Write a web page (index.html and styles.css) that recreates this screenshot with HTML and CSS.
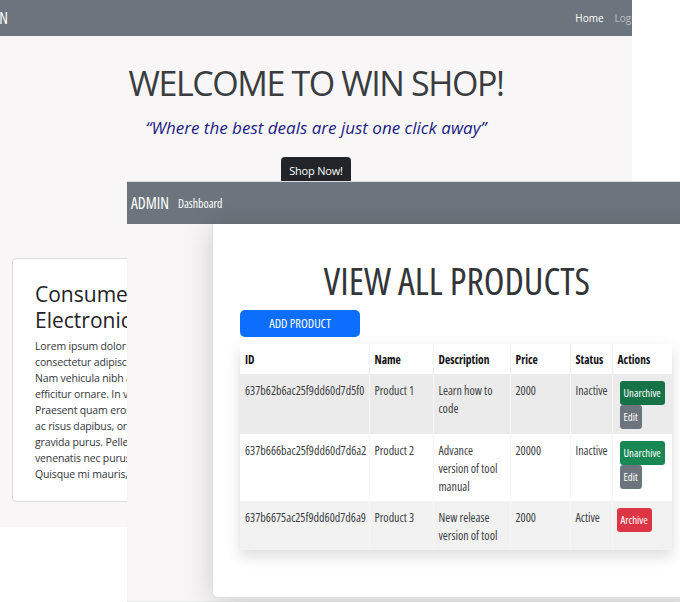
FILE: index.html
```html
<!DOCTYPE html>
<html lang="en">
<head>
<meta charset="utf-8">
<title>Win Shop</title>
<link rel="stylesheet" href="styles.css">
</head>
<body>
<div class="desk">
  <div class="shop">
    <nav class="shop-nav">
      <span class="brand shop-brand">ADMIN</span>
      <div class="shop-links">
        <a class="nav-link active">Home</a>
        <a class="nav-link">Logout</a>
      </div>
    </nav>
    <section class="hero">
      <h1 class="hero-title">WELCOME TO WIN SHOP!</h1>
      <p class="tagline">“Where the best deals are just one click away”</p>
      <button class="btn btn-dark">Shop Now!</button>
    </section>
    <div class="cards">
      <div class="card">
        <h2 class="card-title">Consumer Electronics</h2>
        <p class="card-text">
          <span>Lorem ipsum dolor sit amet,</span>
          <span>consectetur adipiscing elit.</span>
          <span>Nam vehicula nibh a sapien</span>
          <span>efficitur ornare. In vitae est.</span>
          <span>Praesent quam eros, tempus</span>
          <span>ac risus dapibus, ornare luctus</span>
          <span>gravida purus. Pellentesque</span>
          <span>venenatis nec purus vitae.</span>
          <span>Quisque mi mauris, rhoncus.</span>
        </p>
      </div>
    </div>
  </div>

  <div class="admin-window">
    <nav class="admin-nav">
      <span class="brand">ADMIN</span>
      <a class="admin-link">Dashboard</a>
    </nav>
    <div class="admin-body">
      <div class="admin-card">
        <h1 class="admin-title">VIEW ALL PRODUCTS</h1>
        <button class="btn btn-primary add-btn">ADD PRODUCT</button>
        <table class="products">
          <colgroup>
            <col class="c-id"><col class="c-name"><col class="c-desc"><col class="c-price"><col class="c-status"><col class="c-act">
          </colgroup>
          <thead>
            <tr><th>ID</th><th>Name</th><th>Description</th><th>Price</th><th>Status</th><th>Actions</th></tr>
          </thead>
          <tbody>
            <tr class="row-a">
              <td>637b62b6ac25f9dd60d7d5f0</td><td>Product 1</td><td>Learn how to code</td><td>2000</td><td>Inactive</td>
              <td><button class="btn-sm btn-success dark">Unarchive</button><button class="btn-sm btn-secondary">Edit</button></td>
            </tr>
            <tr class="row-b">
              <td>637b666bac25f9dd60d7d6a2</td><td>Product 2</td><td>Advance version of tool manual</td><td>20000</td><td>Inactive</td>
              <td><button class="btn-sm btn-success">Unarchive</button><button class="btn-sm btn-secondary">Edit</button></td>
            </tr>
            <tr class="row-c">
              <td>637b6675ac25f9dd60d7d6a9</td><td>Product 3</td><td>New release version of tool</td><td>2000</td><td>Active</td>
              <td class="act-narrow"><button class="btn-sm btn-danger">Archive</button></td>
            </tr>
          </tbody>
        </table>
      </div>
    </div>
  </div>
</div>
</body>
</html>
```

FILE: styles.css
```css
* { box-sizing: border-box; }

html, body {
  margin: 0;
  padding: 0;
  background: #ffffff;
}

body {
  font-family: "Open Sans", "Noto Sans", sans-serif;
  color: #212529;
}

.desk {
  position: relative;
  width: 680px;
  height: 602px;
  overflow: hidden;
}

/* ---------- background shop page ---------- */
.shop {
  width: 632px;
  height: 527px;
  background: #f8f6f7;
  overflow: hidden;
}

.shop-nav {
  height: 36px;
  background: #6c757d;
  display: flex;
  align-items: center;
  justify-content: space-between;
}

.brand {
  color: #fff;
  font-size: 15.5px;
  font-stretch: condensed;
}

.shop-brand {
  margin-left: -30px;
}

.shop-links {
  display: flex;
  gap: 11px;
  margin-right: -15px;
}

.nav-link {
  font-size: 10px;
  color: rgba(255, 255, 255, 0.55);
}

.nav-link.active {
  color: #fff;
}

.hero {
  text-align: center;
  padding-top: 26px;
}

.hero-title {
  margin: 0;
  font-size: 34px;
  line-height: 42px;
  letter-spacing: -1.4px;
  font-weight: 400;
  color: #3a3d40;
}

.tagline {
  margin: 13px 0 0;
  font-size: 17px;
  line-height: 22px;
  font-style: italic;
  color: #1b1b84;
}

.btn {
  font-family: inherit;
  border: none;
  cursor: pointer;
}

.btn-dark {
  margin-top: 18px;
  background: #212529;
  color: #fff;
  font-size: 11px;
  letter-spacing: -0.2px;
  height: 26px;
  padding: 0 8px;
  border-radius: 4px;
}

.cards {
  padding: 75px 0 0 12px;
}

.card {
  width: 210px;
  background: #fff;
  border: 1px solid #d9d9d9;
  border-radius: 4px;
  padding: 22px 22px 19px;
}

.card-title {
  margin: 0;
  font-size: 21px;
  line-height: 26px;
  font-weight: 500;
  color: #1f2226;
}

.card-text {
  margin: 5px 0 0;
  font-size: 10.5px;
  line-height: 16px;
  letter-spacing: -0.15px;
  color: #33363a;
}

.card-text span {
  display: block;
  white-space: nowrap;
}

/* ---------- overlay admin window ---------- */
.admin-window {
  position: absolute;
  left: 127px;
  top: 181px;
  width: 553px;
  height: 421px;
  border-top: 1px solid #dcdcdc;
  background: #ebebeb;
  overflow: hidden;
  font-stretch: condensed;
}

.admin-nav {
  height: 42px;
  background: #6c757d;
  display: flex;
  align-items: center;
  gap: 9px;
  padding-left: 4px;
}

.admin-link {
  color: #fff;
  font-size: 11.8px;
}

.admin-body {
  height: 377px;
  background: #f7f5f6;
  padding-left: 85px;
}

.admin-card {
  width: 490px;
  height: 374px;
  background: #fff;
  border: 1px solid #e2e2e2;
  border-top: none;
  border-radius: 0 0 0 6px;
  box-shadow: 0 4px 28px rgba(0, 0, 0, 0.17);
  padding: 35px 0 0 27px;
}

.admin-title {
  margin: 0 0 8px -27px;
  text-align: center;
  font-size: 38px;
  line-height: 43px;
  font-weight: 400;
  color: #333639;
}

.btn-primary {
  display: block;
  width: 120px;
  height: 27px;
  background: #0d6efd;
  color: #fff;
  font-size: 12.5px;
  font-stretch: condensed;
  border-radius: 5px;
}

.products {
  margin-top: 7px;
  width: 432px;
  table-layout: fixed;
  border-collapse: collapse;
  font-size: 12px;
  line-height: 18px;
  box-shadow: 0 6px 14px rgba(0, 0, 0, 0.14);
}

.c-id { width: 129px; }
.c-name { width: 64px; }
.c-desc { width: 77px; }
.c-price { width: 60px; }
.c-status { width: 42px; }
.c-act { width: 60px; }

.products th {
  text-align: left;
  font-weight: 700;
  font-size: 11.5px;
  color: #111;
  background: #fff;
  padding: 7px 5px 5px 5px;
  border-right: 1px solid #f0f0f0;
}

.products td {
  vertical-align: top;
  color: #3b3e42;
  padding: 8px 5px 5px 5px;
  border-right: 1px solid #f6f6f6;
}

.products th:last-child,
.products td:last-child {
  border-right: none;
}

.row-a td { background: #ebebeb; }
.row-b td { background: #ffffff; }
.row-c td { background: #f2f2f2; }

.btn-sm {
  display: block;
  font-family: inherit;
  font-stretch: condensed;
  border: none;
  color: #fff;
  font-size: 10.8px;
  height: 24px;
  line-height: 24px;
  padding: 0 4px;
  border-radius: 3px;
  margin-left: 2px;
  margin-top: -1px;
}

.btn-sm + .btn-sm {
  margin-top: 0;
}

.btn-success { background: #198754; }
.btn-success.dark { background: #157347; }
.btn-secondary { background: #6c757d; }
.btn-danger { background: #dc3545; }

.act-narrow .btn-sm {
  margin-left: -1px;
}
```
